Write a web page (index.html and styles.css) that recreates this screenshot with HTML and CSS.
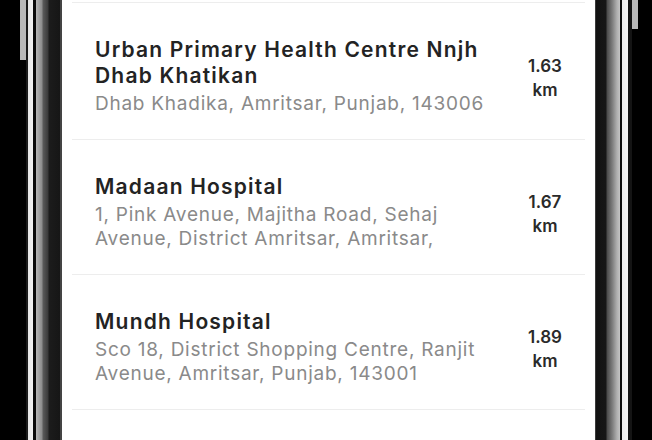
FILE: index.html
```html
<!DOCTYPE html>
<html lang="en">
<head>
    <meta charset="UTF-8">
    <title>Nearby Hospitals</title>
    <link rel="stylesheet" href="styles.css">
</head>
<body>
    <div class="phone">
        <div class="bezel bezel-left">
            <div class="bezel-gap"></div>
            <div class="button-col"><div class="side-button"></div></div>
            <div class="frame frame-left"></div>
        </div>

        <div class="screen">
            <div class="row-tail"></div>

            <div class="row">
                <div class="info">
                    <div class="name">Urban Primary Health Centre Nnjh Dhab Khatikan</div>
                    <div class="address">Dhab Khadika, Amritsar, Punjab, 143006</div>
                </div>
                <div class="distance">1.63<br>km</div>
            </div>

            <div class="row">
                <div class="info">
                    <div class="name">Madaan Hospital</div>
                    <div class="address">1, Pink Avenue, Majitha Road, Sehaj Avenue, District Amritsar, Amritsar,</div>
                </div>
                <div class="distance">1.67<br>km</div>
            </div>

            <div class="row">
                <div class="info">
                    <div class="name">Mundh Hospital</div>
                    <div class="address">Sco 18, District Shopping Centre, Ranjit Avenue, Amritsar, Punjab, 143001</div>
                </div>
                <div class="distance">1.89<br>km</div>
            </div>
        </div>

        <div class="bezel bezel-right">
            <div class="frame frame-right"></div>
            <div class="button-col"><div class="side-button short"></div></div>
            <div class="bezel-gap"></div>
        </div>
    </div>
</body>
</html>
```

FILE: styles.css
```css
:root {
    --text-dark: #232323;
    --text-muted: #8a8a8a;
    --divider: #ededed;
}

html, body {
    margin: 0;
    height: 100%;
    overflow: hidden;
    background: #000;
}

body {
    font-family: Inter, "Open Sans", sans-serif;
}

.phone {
    display: flex;
    height: 100%;
}

/* phone edges */
.bezel {
    display: flex;
    flex-shrink: 0;
}

.bezel-left .bezel-gap {
    width: 20px;
}

.bezel-right .bezel-gap {
    width: 14px;
}

.button-col {
    width: 6px;
}

.side-button {
    height: 60px;
    background: #b9b9b9;
}

.side-button.short {
    height: 29px;
}

.frame-left {
    width: 36px;
    background: linear-gradient(to right,
        #1a1a1a 0, #1a1a1a 2px,
        #e6e6e6 2px, #f2f2f2 7px,
        #0a0a0a 7px, #0a0a0a 10px,
        #b5b5b5 10px, #8c8c8c 16px,
        #5a5a5a 17px, #3a3a3a 22px,
        #1c1c1c 23px, #161616 34px,
        #444 34px, #444 36px);
}

.frame-right {
    width: 37px;
    background: linear-gradient(to right,
        #3a3a3a 0, #3a3a3a 1px,
        #121212 1px, #161616 11px,
        #4a4a4a 12px, #7a7a7a 17px,
        #b0b0b0 22px, #c4c4c4 25px,
        #0c0c0c 25px, #0c0c0c 27px,
        #ececec 27px, #f4f4f4 33px,
        #141414 33px, #141414 37px);
}

/* list */
.screen {
    flex: 1;
    background: #fff;
    overflow: hidden;
}

.row-tail {
    height: 2px;
    margin: 0 10px;
    border-bottom: 1px solid var(--divider);
}

.row {
    display: flex;
    align-items: center;
    margin: 0 10px;
    padding: 34px 0 23px 23px;
    border-bottom: 1px solid var(--divider);
}

.info {
    width: 400px;
}

.name {
    font-size: 21px;
    line-height: 26px;
    font-weight: 600;
    letter-spacing: 1.2px;
    color: var(--text-dark);
}

.address {
    margin-top: 3px;
    font-size: 19px;
    line-height: 24px;
    letter-spacing: 0.75px;
    color: var(--text-muted);
}

.distance {
    flex: 1;
    margin-top: 2px;
    padding-left: 10px;
    text-align: center;
    font-size: 17px;
    line-height: 24px;
    font-weight: 600;
    color: #2a2a2a;
}
```
